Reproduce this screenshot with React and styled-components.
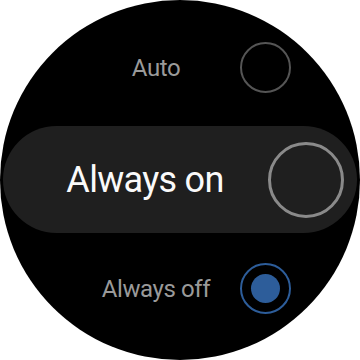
import React from "react"
import styled, { createGlobalStyle } from "styled-components"

const GlobalStyle = createGlobalStyle`
  html, body {
    margin: 0;
    padding: 0;
    background: #fff;
  }
`

const Watch = styled.div`
  width: 360px;
  height: 360px;
  border-radius: 50%;
  background: #000;
  overflow: hidden;
  display: flex;
  flex-direction: column;
  padding-top: 42px;
  box-sizing: border-box;
  font-family: Roboto, "Noto Sans", sans-serif;
`

const Row = styled.div`
  display: flex;
  align-items: center;
  height: 51px;
  padding: 0 69px 0 72px;
`

const Label = styled.span`
  flex: 1;
  text-align: center;
  color: ${p => (p.active ? "#fafafa" : "#9a9a9a")};
  font-size: ${p => (p.active ? "36px" : "24px")};
  letter-spacing: ${p => (p.active ? "-0.7px" : "-0.4px")};
`

const Pill = styled.div`
  display: flex;
  align-items: center;
  height: 107px;
  margin: 33px 3px 30px;
  padding: 0 13px 0 19px;
  border-radius: 54px;
  background: #1f1f1f;
`

const Radio = styled.span`
  flex: none;
  box-sizing: border-box;
  width: ${p => (p.big ? "76px" : "51px")};
  height: ${p => (p.big ? "76px" : "51px")};
  border-radius: 50%;
  border: ${p => (p.big ? "3px solid #8a8a8a" : p.checked ? "2px solid #2d5d9a" : "2px solid #555")};
  display: flex;
  align-items: center;
  justify-content: center;
`

const Dot = styled.span`
  width: 29px;
  height: 29px;
  border-radius: 50%;
  background: #2d5d9a;
`

const App = () => (
  <>
    <GlobalStyle />
    <Watch>
      <Row>
        <Label>Auto</Label>
        <Radio />
      </Row>
      <Pill>
        <Label active>Always on</Label>
        <Radio big />
      </Pill>
      <Row>
        <Label>Always off</Label>
        <Radio checked>
          <Dot />
        </Radio>
      </Row>
    </Watch>
  </>
)

export default App
